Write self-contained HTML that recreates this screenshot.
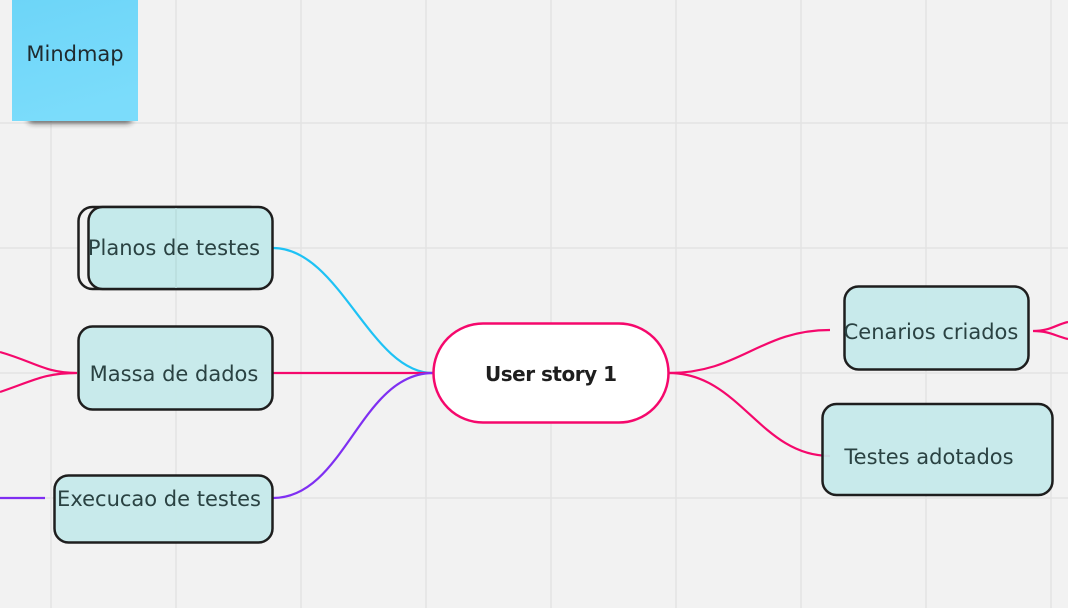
<!DOCTYPE html>
<html><head><meta charset="utf-8"><style>
html,body{margin:0;padding:0;width:1068px;height:608px;overflow:hidden;background:#f2f2f2}
svg{display:block}
text{font-family:"DejaVu Sans","Liberation Sans",sans-serif}
</style></head><body>
<svg width="1068" height="608" viewBox="0 0 1068 608">
<defs>
<filter id="sh" x="-20%" y="-50%" width="140%" height="300%"><feGaussianBlur stdDeviation="3"/></filter>
<linearGradient id="st" x1="0" y1="0" x2="0.3" y2="1"><stop offset="0" stop-color="#6dd5f8"/><stop offset="1" stop-color="#7bdcfb"/></linearGradient>
</defs>
<rect width="1068" height="608" fill="#f2f2f2"/>
<g stroke="#e3e3e3" stroke-width="1.5">
<path d="M51 0V608M176 0V608M301 0V608M426 0V608M551 0V608M676 0V608M801 0V608M926 0V608M1051 0V608"/>
<path d="M0 123H1068M0 248H1068M0 373H1068M0 498H1068"/>
</g>
<rect x="28" y="114" width="104" height="9" rx="4" fill="#222" opacity="0.75" filter="url(#sh)"/>
<rect x="12" y="0" width="126" height="121" fill="url(#st)"/>
<text x="75" y="61" font-size="21" fill="#1f2a2e" text-anchor="middle">Mindmap</text>
<g fill="none" stroke-width="2.2">
<path d="M433 373 C370 373 340 248 273 248" stroke="#1ec2f5"/>
<path d="M433 373 L273 373" stroke="#f5086c"/>
<path d="M433 373 C360 373 345 498 273 498" stroke="#7f2ff2"/>
<path d="M669 373 C740 373 760 330 830 330" stroke="#f5086c"/>
<path d="M669 373 C740 373 760 456 830 456" stroke="#f5086c"/>
<path d="M0 352 C35 362 45 373 77 373 M0 392 C35 380 45 373 77 373" stroke="#f5086c"/>
<path d="M0 498 L45 498" stroke="#7f2ff2"/>
<path d="M1033 331 C1050 331 1055 325 1068 322 M1033 331 C1050 331 1055 336 1068 339" stroke="#f5086c"/>
</g>
<g stroke="#1e1e1e" stroke-width="2.5" fill="#c5eaeb" fill-opacity="0.93">
<rect x="78.5" y="207" width="185" height="82" rx="14" fill="#f2f2f2" fill-opacity="1"/>
<rect x="88.5" y="207" width="184" height="82" rx="14" fill-opacity="1"/>
<rect x="78.5" y="326.5" width="194" height="83" rx="14"/>
<rect x="54.5" y="475.5" width="218" height="67" rx="14"/>
<rect x="844.5" y="286.5" width="184" height="83" rx="14"/>
<rect x="822.5" y="404" width="230" height="91" rx="14"/>
</g>
<path d="M176 208V288" stroke="#b8dcdd" stroke-width="1.5"/>
<rect x="433.5" y="323.5" width="235" height="99" rx="49.5" fill="#fff" stroke="#f5086c" stroke-width="2.5"/>
<g font-size="21" fill="#2a4242" text-anchor="middle">
<text x="174" y="255">Planos de testes</text>
<text x="174" y="381">Massa de dados</text>
<text x="159" y="506">Execucao de testes</text>
<text x="931" y="339">Cenarios criados</text>
<text x="929" y="464">Testes adotados</text>
</g>
<text x="551" y="381" font-size="20" font-weight="bold" fill="#1e1e1e" text-anchor="middle" textLength="132">User story 1</text>
</svg>
</body></html>
